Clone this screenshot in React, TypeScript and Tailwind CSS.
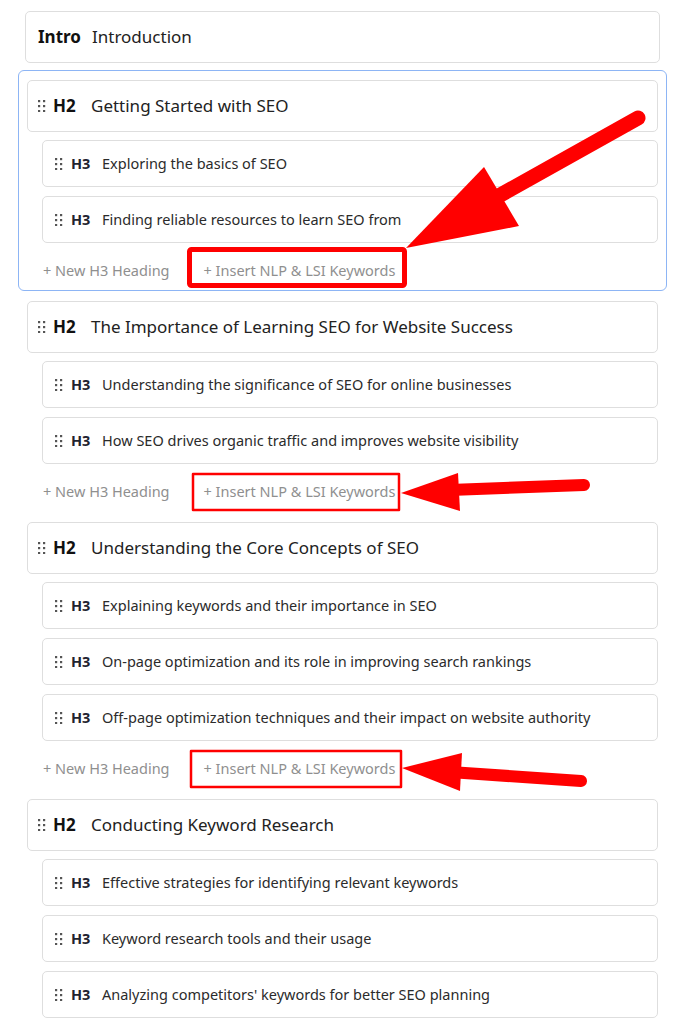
import React from "react";

type Section = {
  title: string;
  items: string[];
};

const sections: Section[] = [
  {
    title: "Getting Started with SEO",
    items: ["Exploring the basics of SEO", "Finding reliable resources to learn SEO from"],
  },
  {
    title: "The Importance of Learning SEO for Website Success",
    items: [
      "Understanding the significance of SEO for online businesses",
      "How SEO drives organic traffic and improves website visibility",
    ],
  },
  {
    title: "Understanding the Core Concepts of SEO",
    items: [
      "Explaining keywords and their importance in SEO",
      "On-page optimization and its role in improving search rankings",
      "Off-page optimization techniques and their impact on website authority",
    ],
  },
  {
    title: "Conducting Keyword Research",
    items: [
      "Effective strategies for identifying relevant keywords",
      "Keyword research tools and their usage",
      "Analyzing competitors' keywords for better SEO planning",
    ],
  },
];

const Grip = () => (
  <svg width="8" height="12" viewBox="0 0 8 12" className="shrink-0 text-[#555]">
    {[0, 5, 10].map((y) =>
      [0, 5].map((x) => <rect key={`${x}-${y}`} x={x} y={y} width="2.2" height="2.2" fill="currentColor" />)
    )}
  </svg>
);

const H3Row = ({ text }: { text: string }) => (
  <div className="flex h-[47px] items-center rounded-[5px] border border-[#dedede] bg-white pl-[12px]">
    <Grip />
    <span className="ml-[8px] w-[31px] text-[14.5px] font-bold text-[#1f2330]">H3</span>
    <span className="text-[14.5px] text-[#2b2b2b]">{text}</span>
  </div>
);

const SectionGroup = ({ section, active, last }: { section: Section; active?: boolean; last?: boolean }) => (
  <div
    className={
      active
        ? "rounded-[6px] border border-[#8db5f5] px-[8px] pt-[9px]"
        : "rounded-[6px] border border-transparent px-[8px] pt-[9px]"
    }
  >
    <div className="flex h-[52px] items-center rounded-[5px] border border-[#dedede] bg-white pl-[10px]">
      <Grip />
      <span className="ml-[7px] w-[38px] text-[17px] font-bold text-[#111]">H2</span>
      <span className="text-[17px] text-[#222]">{section.title}</span>
    </div>
    <div className="ml-[15px] mt-[8px] flex flex-col gap-[9px]">
      {section.items.map((item) => (
        <H3Row key={item} text={item} />
      ))}
    </div>
    {!last && (
      <div className="mt-[9px] flex h-[38px] items-center text-[14.5px] text-[#8f8f8f]">
        <span className="px-4">+ New H3 Heading</span>
        <span className="pl-[18px] pr-4">+ Insert NLP &amp; LSI Keywords</span>
      </div>
    )}
  </div>
);

const Annotations = () => (
  <svg className="pointer-events-none absolute left-0 top-0" width="683" height="1024" viewBox="0 0 683 1024">
    <g fill="none" stroke="#ff0000" strokeLinejoin="round">
      <rect x="189.5" y="249.5" width="215" height="36" rx="2" strokeWidth="5" />
      <rect x="193" y="474" width="206" height="36" strokeWidth="2.5" />
      <rect x="191" y="751" width="210" height="36" strokeWidth="2.5" />
    </g>
    <g stroke="#ff0000" strokeLinecap="round">
      <line x1="638" y1="118" x2="495" y2="198" strokeWidth="15" />
      <line x1="584" y1="485" x2="450" y2="490" strokeWidth="12" />
      <line x1="581" y1="781" x2="450" y2="772" strokeWidth="12" />
    </g>
    <g fill="#ff0000">
      <polygon points="406,248 484,167 519,226" />
      <polygon points="401,493 458,473 460,511" />
      <polygon points="402,768 462,753 460,791" />
    </g>
  </svg>
);

export default function App() {
  return (
    <div
      className="relative h-[1024px] w-[683px] overflow-hidden bg-white pl-[18px] pr-[16px] pt-[11px]"
      style={{ fontFamily: '"Noto Sans", "Open Sans", sans-serif' }}
    >
      <div className="mx-[7px] mb-[7px] flex h-[52px] items-center rounded-[5px] border border-[#dedede] bg-white pl-[12px]">
        <span className="w-[54px] text-[17px] font-bold text-[#111]">Intro</span>
        <span className="text-[17px] text-[#222]">Introduction</span>
      </div>
      {sections.map((s, i) => (
        <SectionGroup key={s.title} section={s} active={i === 0} last={i === sections.length - 1} />
      ))}
      <Annotations />
    </div>
  );
}
